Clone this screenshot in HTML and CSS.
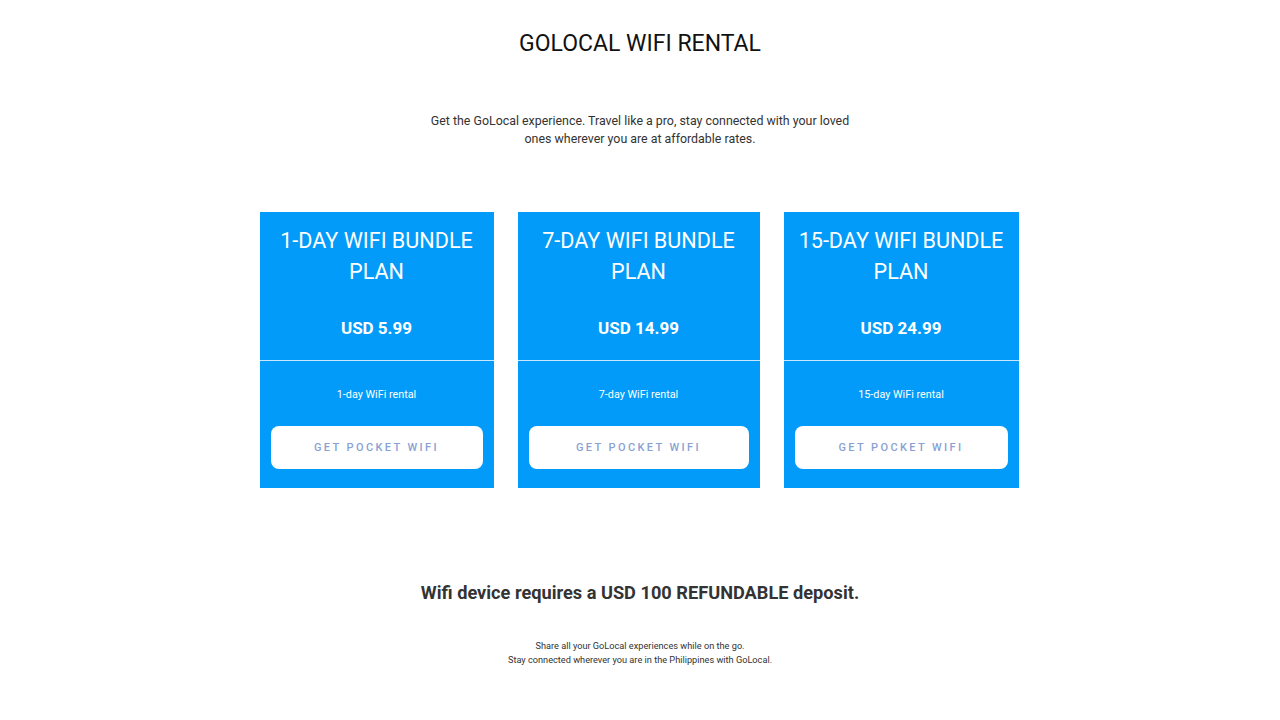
FILE: index.html
```html
<!DOCTYPE html>
<html lang="en">
<head>
  <meta charset="UTF-8" />
  <title>GoLocal WiFi Rental</title>
  <meta name="viewport" content="width=device-width, initial-scale=1.0" />
  <link rel="stylesheet" href="styles.css">
</head>
<body>

  <header class="intro">
    <h1>GOLOCAL WIFI RENTAL</h1>
    <p>Get the GoLocal experience. Travel like a pro, stay connected with your loved ones wherever you are at affordable rates.</p>
  </header>

  <section class="plans">
    <div class="plan">
      <div class="plan-head">
        <h2>1-DAY WIFI BUNDLE PLAN</h2>
        <div class="price">USD 5.99</div>
      </div>
      <div class="plan-body">
        <p>1-day WiFi rental</p>
        <a class="btn" href="#">GET POCKET WIFI</a>
      </div>
    </div>

    <div class="plan">
      <div class="plan-head">
        <h2>7-DAY WIFI BUNDLE PLAN</h2>
        <div class="price">USD 14.99</div>
      </div>
      <div class="plan-body">
        <p>7-day WiFi rental</p>
        <a class="btn" href="#">GET POCKET WIFI</a>
      </div>
    </div>

    <div class="plan">
      <div class="plan-head">
        <h2>15-DAY WIFI BUNDLE PLAN</h2>
        <div class="price">USD 24.99</div>
      </div>
      <div class="plan-body">
        <p>15-day WiFi rental</p>
        <a class="btn" href="#">GET POCKET WIFI</a>
      </div>
    </div>
  </section>

  <section class="deposit">
    <h3>Wifi device requires a USD 100 REFUNDABLE deposit.</h3>
    <p>Share all your GoLocal experiences while on the go.<br>Stay connected wherever you are in the Philippines with GoLocal.</p>
  </section>

</body>
</html>
```

FILE: styles.css
```css
body {
  font-family: Roboto, "Liberation Sans", Arial, sans-serif;
  margin: 0;
  padding: 0;
  background: #fff;
  color: #333;
}
.intro {
  text-align: center;
  padding-top: 29px;
}
.intro h1 {
  margin: 0;
  font-size: 23px;
  font-weight: 400;
  line-height: 30px;
  color: #111;
}
.intro p {
  max-width: 424px;
  margin: 53px auto 0;
  font-size: 12.4px;
  line-height: 18px;
  color: #333;
}
.plans {
  display: grid;
  grid-template-columns: 234px 242px 235px;
  column-gap: 24px;
  justify-content: center;
  margin-top: 64px;
  padding-right: 2px;
}
.plan {
  background: #039bf9;
  color: #fff;
  text-align: center;
}
.plan-head {
  padding: 13px 12px 22px;
  border-bottom: 1px solid #c9e8fd;
}
.plan-head h2 {
  margin: 0;
  font-size: 21.6px;
  font-weight: 400;
  line-height: 31px;
}
.price {
  margin-top: 31px;
  font-size: 17px;
  font-weight: 700;
  line-height: 20px;
}
.plan-body {
  padding: 27px 11px 19px;
}
.plan-body p {
  margin: 0 0 24px;
  font-size: 10.8px;
  line-height: 14px;
}
.btn {
  display: block;
  height: 43px;
  line-height: 43px;
  background: #fff;
  border-radius: 8px;
  color: #8aa1d3;
  font-size: 11px;
  font-weight: 500;
  letter-spacing: 2.4px;
  text-decoration: none;
}
.deposit {
  text-align: center;
  margin-top: 93px;
}
.deposit h3 {
  margin: 0;
  font-size: 18.2px;
  font-weight: 700;
  line-height: 24px;
  color: #333;
}
.deposit p {
  margin: 34px 0 0;
  font-size: 9.2px;
  line-height: 14px;
  color: #333;
}
```
